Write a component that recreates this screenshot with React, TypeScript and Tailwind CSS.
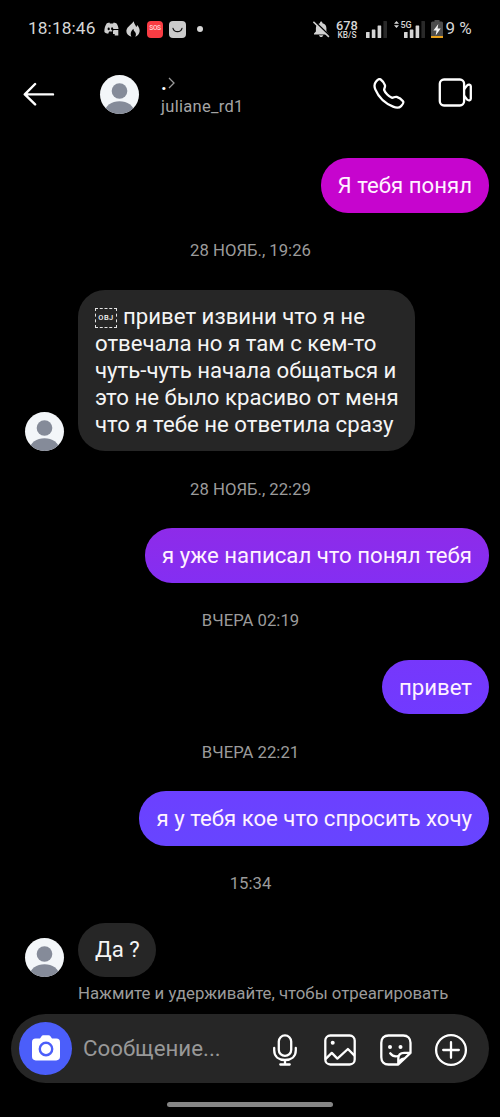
import type { ReactNode } from "react";

function Avatar() {
  return (
    <svg viewBox="0 0 39 39" className="size-[39px] shrink-0 rounded-full bg-[#f3f6f9]">
      <circle cx="19.5" cy="16" r="7.8" fill="#858b99" />
      <ellipse cx="19.5" cy="37" rx="14.5" ry="10.8" fill="#858b99" />
    </svg>
  );
}

function Signal({ className }: { className: string }) {
  return (
    <svg viewBox="0 0 21 17" className={className}>
      <g fill="#d6d6d6">
        <rect x="0" y="11" width="3.6" height="6" rx="0.5" />
        <rect x="5.8" y="8.5" width="3.6" height="8.5" rx="0.5" />
        <rect x="11.6" y="4.5" width="3.6" height="12.5" rx="0.5" />
      </g>
      <rect x="17.4" y="0" width="3.6" height="17" rx="0.5" fill="#292929" />
    </svg>
  );
}

function StatusBar() {
  return (
    <div className="flex h-[58px] items-center pl-[28px] text-[#d6d6d6]">
      <span className="w-[76px] text-[17.3px] tracking-[0.1px]">18:18:46</span>
      <svg viewBox="0 0 15 14" className="mr-[7px] h-[14px] w-[15px] shrink-0" fill="#cfcfcf">
        <path d="M2.8 1.3 5.4.4l.5 1h3.2l.6-1 2.6.9C13.7 3.1 14.4 5 14.5 7H9.2c.1-1-.4-1.7-1.1-1.7S7 6 7.1 7c.1.9.6 1.3 1.2 1.4v1.2l-3.2-.1-.9 2.2C2.7 11.7 1.5 11 .4 10 .2 6.5 1.1 3.7 2.8 1.3Z" />
        <path d="M9.3 9V8h5v5.4h-3.6v-1.3H9V9Z" />
        <ellipse cx="4.7" cy="6.9" rx="1.1" ry="1.4" fill="#000" />
      </svg>
      <svg viewBox="0 0 14 16" className="mr-[7px] h-[16px] w-[14px] shrink-0" fill="#d0d0d0">
        <path d="M7.8.2C8 2.8 9.5 3.4 10.2 6c.5-.4.9-1 .9-1.9 2 2.2 3 4.7 2.3 7.1-.5 2.2-2 3.8-4.2 4.5 1.3-2 .7-3.8-.6-5.1-.8-.8-1.2-1.8-1.1-2.9-2 1.7-3.9 4.6-2.1 8C2 14.8.1 12.5.4 9.5.7 7 2.3 5.9 3.9 4.2 5.5 2.8 6.8 1.7 7.8.2Z" />
      </svg>
      <span className="mr-[6px] flex h-[17px] w-[16px] shrink-0 items-center justify-center rounded-[4px] bg-[#f83c43] text-[6.5px] font-medium tracking-[-0.3px] text-[#ffdada]">
        SOS
      </span>
      <svg viewBox="0 0 17 17" className="mr-[11px] size-[17px] shrink-0">
        <rect width="17" height="17" rx="4" fill="#cbcbcb" />
        <path d="M4 7.3a4.7 4.7 0 0 0 9 0" fill="none" stroke="#111" strokeWidth="1.2" strokeLinecap="round" />
      </svg>
      <span className="size-[5.5px] shrink-0 rounded-full bg-[#d6d6d6]" />
      <svg viewBox="0 0 17 17" className="ml-[110px] size-[17px] shrink-0">
        <path d="M6.9 2.2C7-.1 9.3-.1 9.5 2.2c2.7.7 3.9 2.6 3.9 4.9v3.5l1.8 2v1H1v-1l1.9-2V7.1c0-2.3 1.3-4.2 4-4.9ZM6 14.3h4.3c-.4 2.4-3.9 2.4-4.3 0Z" fill="#d1d1d1" />
        <path d="m1.3 0 15.4 14.8" stroke="#000" strokeWidth="1.6" />
        <path d="m.4.8 15.5 15.1" stroke="#d1d1d1" strokeWidth="1.5" />
      </svg>
      <div className="ml-[6px] flex w-[23px] shrink-0 flex-col items-center font-medium">
        <span className="text-[12.8px] leading-[11px]">678</span>
        <span className="text-[8.4px] leading-[8px]">KB/S</span>
      </div>
      <Signal className="ml-[7px] h-[17px] w-[21px] shrink-0" />
      <div className="relative ml-[7px] h-[17px] w-[31px] shrink-0">
        <Signal className="absolute right-0 top-0 h-[17px] w-[21px]" />
        <svg viewBox="0 0 5 7" className="absolute left-0 top-0 h-[7px] w-[5px]" fill="#d6d6d6">
          <path d="M0 2.7 2.5 0 5 2.7ZM0 4.3h5L2.5 7Z" />
        </svg>
        <span className="absolute left-[7px] top-[-1px] text-[9px] font-medium leading-[10px]">5G</span>
      </div>
      <svg viewBox="0 0 12 18" className="ml-[6px] h-[18px] w-[12px] shrink-0">
        <path d="M3.5 0h5v1.5h2A1.5 1.5 0 0 1 12 3v15H0V3a1.5 1.5 0 0 1 1.5-1.5h2Z" fill="#4c4c4c" />
        <path d="M0 16h12v2H0Z" fill="#e8a11c" />
        <path d="M7.3 4 2.4 10.5h3.1l-.8 5 5-6.9H6.6Z" fill="#f2f2f2" />
      </svg>
      <span className="ml-[3px] whitespace-nowrap text-[17px]">9 %</span>
    </div>
  );
}

function Header() {
  return (
    <header className="flex h-[100px] pl-[23px] pt-[17px] text-white">
      <svg viewBox="0 0 32 24" className="mt-[7px] h-[24px] w-[32px]" fill="none" stroke="currentColor" strokeWidth="2.4" strokeLinecap="round" strokeLinejoin="round">
        <path d="M30 12.4H2M12.1 2 1.8 12.4 12.1 22.4" />
      </svg>
      <div className="ml-[45px]">
        <Avatar />
      </div>
      <div className="ml-[22px] w-[212px]">
        <div className="flex h-[19px] items-start">
          <span className="w-[7px] text-[20px] font-bold leading-[17px]">.</span>
          <svg viewBox="0 0 7 12" className="mt-[2px] h-[12px] w-[7px]" fill="none" stroke="#9a9a9a" strokeWidth="1.3">
            <path d="m1 1 5 5-5 5" />
          </svg>
        </div>
        <div className="mt-[1px] text-[16.5px] leading-[23px] tracking-[0.3px] text-[#a5a5a5]">juliane_rd1</div>
      </div>
      <svg viewBox="0 0 32 32" className="mt-[3px] size-[32px]" fill="none" stroke="currentColor" strokeWidth="2.3" strokeLinejoin="round">
        <path d="M3.1 3.5c1.4-1.8 3.5-2.8 4.6-2 1.8 1.3 3.5 3.7 4.2 5.7.7 2-1.2 3.3-.7 5 .8 2.5 4.8 6.6 7.5 7.5 1.7.5 3-1.4 5-.8 2.1.6 5 2.7 6.3 4.4.9 1.2-.2 3.1-1.9 4.8-1.5 1.5-4.6 2-8 .5C11.7 25.3 5.2 18.3 2.3 11.4 1.1 8.5 1.4 5.5 3.1 3.5Z" />
      </svg>
      <svg viewBox="0 0 34 30" className="ml-[33px] mt-[3px] h-[30px] w-[34px]" fill="none" stroke="currentColor" strokeWidth="2.3" strokeLinejoin="round">
        <rect x="1.8" y="1.5" width="24.3" height="26" rx="4.2" />
        <path d="M26.1 11.2 29 7.5c1.5-1.4 3.8-1 3.8.8v12.4c0 1.8-2.3 2.2-3.8.8l-2.9-3.7" />
      </svg>
    </header>
  );
}

function TimeLabel({ children }: { children: ReactNode }) {
  return (
    <div className="flex h-[77px] items-center justify-center pl-px text-[16.7px] text-[#9b9b9b]">
      {children}
    </div>
  );
}

function Sent({ color, children }: { color: string; children: ReactNode }) {
  return (
    <div className="flex justify-end pr-[11px]">
      <div className={`h-[54.5px] whitespace-nowrap rounded-[27px] px-[17px] pt-[14px] text-[22.2px] leading-[27px] text-[#fff2ff] ${color}`}>
        {children}
      </div>
    </div>
  );
}

function Received({ children }: { children: ReactNode }) {
  return (
    <div className="flex items-end gap-[14px] pl-[25px]">
      <Avatar />
      <div className="min-h-[54.5px] whitespace-nowrap rounded-[27px] bg-[#262626] pb-[13px] pl-[17px] pr-[16px] pt-[13.5px] text-[22.2px] leading-[27px] text-[#f5f5f5]">
        {children}
      </div>
    </div>
  );
}

function Composer() {
  return (
    <div className="ml-[11px] mt-[10px] flex h-[69px] w-[478px] items-center rounded-full bg-[#262626] pl-[8px] text-white">
      <div className="flex size-[53px] shrink-0 items-center justify-center rounded-full bg-[#4b5efa]">
        <svg viewBox="0 0 28 26" className="mb-[2px] h-[26px] w-[28px]">
          <path d="M8 3.6 9.4 1.4C10 .6 10.7.3 11.6.3h4.8c1 0 1.7.4 2.2 1.1L20 3.6h4.4A3.6 3.6 0 0 1 28 7.2v14.4a3.8 3.8 0 0 1-3.8 3.8H3.8A3.8 3.8 0 0 1 0 21.6V7.2a3.6 3.6 0 0 1 3.6-3.6Z" fill="white" />
          <circle cx="14" cy="14" r="6.2" fill="none" stroke="#4b5efa" strokeWidth="2.4" />
        </svg>
      </div>
      <span className="ml-[11px] w-[190px] text-[22.3px] text-[#989898]">Сообщение...</span>
      <svg viewBox="0 0 24 32" className="mt-[2px] h-[32px] w-[24px] shrink-0" fill="none" stroke="currentColor" strokeWidth="2.3" strokeLinecap="round">
        <rect x="5.8" y="1.4" width="12.4" height="20.5" rx="6.2" />
        <path d="M1.2 14v2.2C1.2 22.7 6 26 12 26s10.8-3.3 10.8-9.8V14M12 26v4.3M7.3 30.5h9.4" />
      </svg>
      <svg viewBox="0 0 32 32" className="ml-[27px] mt-[2px] size-[32px] shrink-0" fill="none" stroke="currentColor" strokeWidth="2.3" strokeLinejoin="round">
        <rect x="1.3" y="1.5" width="29.4" height="29" rx="5" />
        <circle cx="8.7" cy="8.8" r="2" fill="currentColor" stroke="none" />
        <path d="m1.5 25.1 6.3-6.2 5.6 5.7L23.9 15l6.6 6.6" />
      </svg>
      <svg viewBox="0 0 32 32" className="ml-[24px] mt-[2px] size-[32px] shrink-0" fill="none" stroke="currentColor" strokeWidth="2.3" strokeLinecap="round" strokeLinejoin="round">
        <path d="M18.3 30.5H8.5c-4.3 0-7.2-2.7-7.2-7.2V8.7c0-4.5 2.9-7.2 7.2-7.2h14.8c4.4 0 7.2 2.8 7.2 7.2v10.2L18.3 30.5Zm0 0v-5.8c0-3.7 2-5.8 5.8-5.8h6.4M10.2 19.3c1.9 2.5 4.7 3.6 8 2.7M23.5 24.6c-1.8.2-3.2 1.4-3.6 3" />
        <circle cx="10" cy="13" r="2" fill="currentColor" stroke="none" />
        <circle cx="20.5" cy="13" r="2" fill="currentColor" stroke="none" />
      </svg>
      <svg viewBox="0 0 34 34" className="ml-[22px] mt-[2px] size-[34px] shrink-0" fill="none" stroke="currentColor" strokeWidth="2.3" strokeLinecap="round">
        <circle cx="17" cy="17" r="14.9" />
        <path d="M9.2 17h15.6M17 9.2v15.6" />
      </svg>
    </div>
  );
}

export default function App() {
  return (
    <div className="h-[1117px] w-[500px] overflow-hidden bg-black font-['Roboto','Noto_Sans',sans-serif]">
      <StatusBar />
      <Header />
      <main>
        <Sent color="bg-[#c605ce]">Я тебя понял</Sent>
        <TimeLabel>28 НОЯБ., 19:26</TimeLabel>
        <Received>
          <span className="mr-[6px] mt-[5px] inline-flex h-[20px] w-[22px] items-center justify-center border border-dashed border-[#e5e5e5] align-top text-[7.5px] font-medium leading-none tracking-[0.4px]">
            OBJ
          </span>
          привет извини что я не
          <br />
          отвечала но я там с кем-то
          <br />
          чуть-чуть начала общаться и
          <br />
          это не было красиво от меня
          <br />
          что я тебе не ответила сразу
        </Received>
        <TimeLabel>28 НОЯБ., 22:29</TimeLabel>
        <Sent color="bg-linear-to-b from-[#8e2be9] to-[#842ef2]">я уже написал что понял тебя</Sent>
        <TimeLabel>ВЧЕРА 02:19</TimeLabel>
        <Sent color="bg-linear-to-b from-[#7637fb] to-[#713aff]">привет</Sent>
        <TimeLabel>ВЧЕРА 22:21</TimeLabel>
        <Sent color="bg-linear-to-b from-[#6c40ff] to-[#6745ff]">я у тебя кое что спросить хочу</Sent>
        <TimeLabel>15:34</TimeLabel>
        <Received>Да ?</Received>
        <p className="ml-[78px] mt-[5px] whitespace-nowrap text-[16.8px] leading-[22px] text-[#9b9b9b]">
          Нажмите и удерживайте, чтобы отреагировать
        </p>
      </main>
      <Composer />
      <div className="mx-auto mt-[19px] h-[5px] w-[166px] rounded-full bg-[#858585]" />
    </div>
  );
}
